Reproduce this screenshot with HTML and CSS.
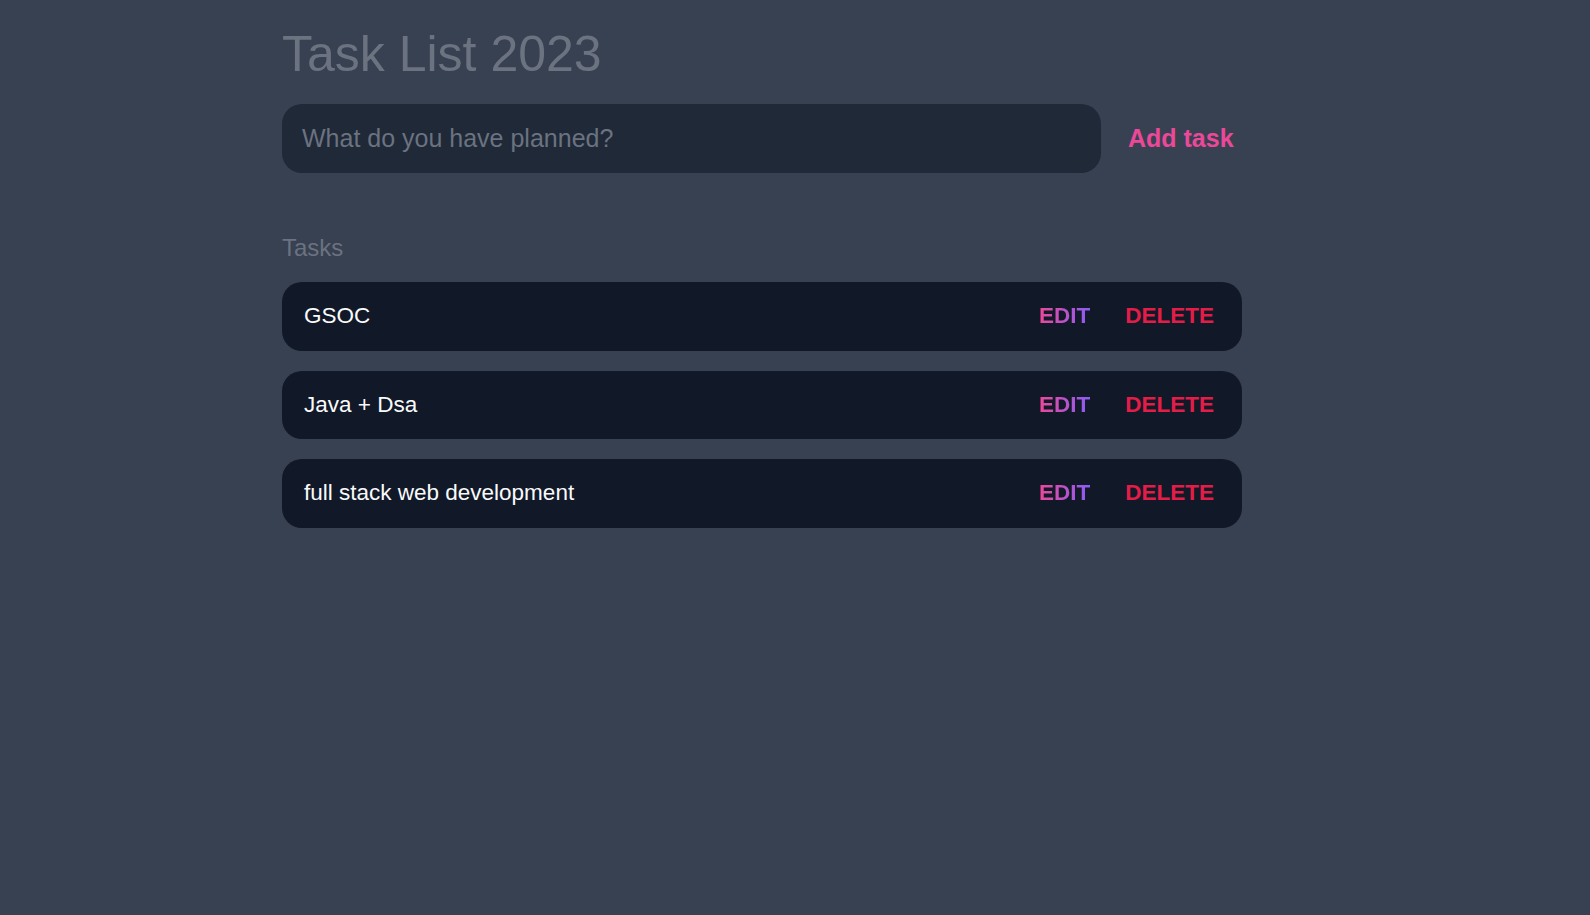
FILE: index.html
```html
<!DOCTYPE html>
<html lang="en">
<head>
<meta charset="utf-8">
<title>Task List 2023</title>
<link rel="stylesheet" href="styles.css">
</head>
<body>
<main class="app">
  <h1 class="title">Task List 2023</h1>
  <form class="new-task">
    <input class="new-task-input" type="text" placeholder="What do you have planned?">
    <button class="add-btn" type="button">Add task</button>
  </form>
  <section class="tasks">
    <h2 class="tasks-heading">Tasks</h2>
    <div class="task-list">
      <div class="task">
        <span class="task-text">GSOC</span>
        <div class="actions">
          <button class="edit" type="button">EDIT</button>
          <button class="delete" type="button">DELETE</button>
        </div>
      </div>
      <div class="task">
        <span class="task-text">Java + Dsa</span>
        <div class="actions">
          <button class="edit" type="button">EDIT</button>
          <button class="delete" type="button">DELETE</button>
        </div>
      </div>
      <div class="task">
        <span class="task-text">full stack web development</span>
        <div class="actions">
          <button class="edit" type="button">EDIT</button>
          <button class="delete" type="button">DELETE</button>
        </div>
      </div>
    </div>
  </section>
</main>
</body>
</html>
```

FILE: styles.css
```css
* { box-sizing: border-box; }

html, body {
  margin: 0;
  padding: 0;
  min-height: 100%;
}

body {
  background: #374151;
  font-family: "Liberation Sans", Arial, sans-serif;
  min-height: 915px;
}

.app {
  width: 1026px;
  margin: 0 auto;
  padding-top: 26px;
}

.title {
  margin: 0;
  font-size: 50px;
  font-weight: 400;
  line-height: 56px;
  color: #6b7280;
}

.new-task {
  display: flex;
  align-items: center;
  margin-top: 22px;
}

.new-task-input {
  width: 819px;
  height: 69px;
  border: none;
  outline: none;
  border-radius: 20px;
  background: #1f2937;
  padding: 0 20px;
  font-family: inherit;
  font-size: 25px;
  color: #e5e7eb;
}

.new-task-input::placeholder {
  color: #6b7280;
}

.add-btn {
  margin-left: 27px;
  padding: 0;
  border: none;
  background: none;
  font-family: inherit;
  font-size: 25px;
  font-weight: 700;
  color: #ec4899;
  cursor: pointer;
}

.tasks {
  margin-top: 61px;
}

.tasks-heading {
  margin: 0;
  font-size: 24px;
  font-weight: 400;
  line-height: 28px;
  color: #6b7280;
}

.task-list {
  display: flex;
  flex-direction: column;
  gap: 20px;
  margin-top: 20px;
}

.task {
  width: 960px;
  height: 68.5px;
  display: flex;
  align-items: center;
  justify-content: space-between;
  background: #111827;
  border-radius: 20px;
  padding: 0 28px 0 22px;
}

.task-text {
  font-size: 22.5px;
  color: #f9fafb;
}

.actions {
  display: flex;
  gap: 35px;
}

.actions button {
  padding: 0;
  border: none;
  background: none;
  font-family: inherit;
  font-size: 22.5px;
  font-weight: 700;
  cursor: pointer;
}

.edit {
  background: linear-gradient(to right, #ec4899, #8b5cf6) !important;
  -webkit-background-clip: text !important;
  background-clip: text !important;
  color: transparent;
}

.delete {
  color: #e11d48;
}
```
